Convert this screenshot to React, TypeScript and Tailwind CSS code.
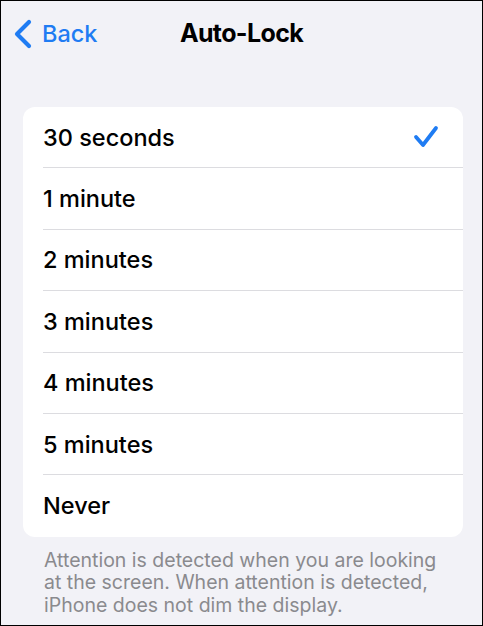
import { useState } from "react";

const OPTIONS = [
  "30 seconds",
  "1 minute",
  "2 minutes",
  "3 minutes",
  "4 minutes",
  "5 minutes",
  "Never",
];

function ChevronLeft() {
  return (
    <svg width="22" height="32" viewBox="0 0 22 32" className="shrink-0">
      <polyline
        points="17,4 5,16 17,28"
        fill="none"
        stroke="#1f7cf3"
        strokeWidth="4.2"
        strokeLinecap="round"
        strokeLinejoin="round"
      />
    </svg>
  );
}

function Check() {
  return (
    <svg width="26" height="24" viewBox="0 0 26 24">
      <polyline
        points="3,12 10,20 23,3"
        fill="none"
        stroke="#1f7cf3"
        strokeWidth="3.8"
        strokeLinecap="round"
        strokeLinejoin="round"
      />
    </svg>
  );
}

export default function App() {
  const [selected, setSelected] = useState(0);

  return (
    <div
      className="h-[626px] w-[483px] overflow-hidden border border-black bg-[#f2f2f7]"
      style={{ fontFamily: "Inter, 'Noto Sans', sans-serif" }}
    >
      {/* nav bar */}
      <div className="relative flex h-[65px] items-center">
        <button className="flex items-center gap-[8px] pl-[11px] text-[23.5px] font-medium text-[#1f7cf3]">
          <ChevronLeft />
          <span>Back</span>
        </button>
        <h1 className="absolute left-0 right-0 text-center text-[25px] font-bold tracking-tight text-black">
          Auto-Lock
        </h1>
      </div>

      {/* options list */}
      <div className="ml-[22px] mr-[19px] mt-[41px] overflow-hidden rounded-[12px] bg-white">
        {OPTIONS.map((label, i) => (
          <button
            key={label}
            onClick={() => setSelected(i)}
            className="block w-full pl-[20px] text-left"
          >
            <div
              className={
                "flex h-[61.4px] items-center justify-between pr-[24px] " +
                (i < OPTIONS.length - 1 ? "border-b border-[#dcdce0]" : "")
              }
            >
              <span className="text-[23.5px] font-medium text-black">
                {label}
              </span>
              {selected === i && <Check />}
            </div>
          </button>
        ))}
      </div>

      <p className="mt-[12px] whitespace-nowrap pl-[43px] text-[19.5px] leading-[22.5px] text-[#8a8a8e]">
        Attention is detected when you are looking
        <br />
        at the screen. When attention is detected,
        <br />
        iPhone does not dim the display.
      </p>
    </div>
  );
}
